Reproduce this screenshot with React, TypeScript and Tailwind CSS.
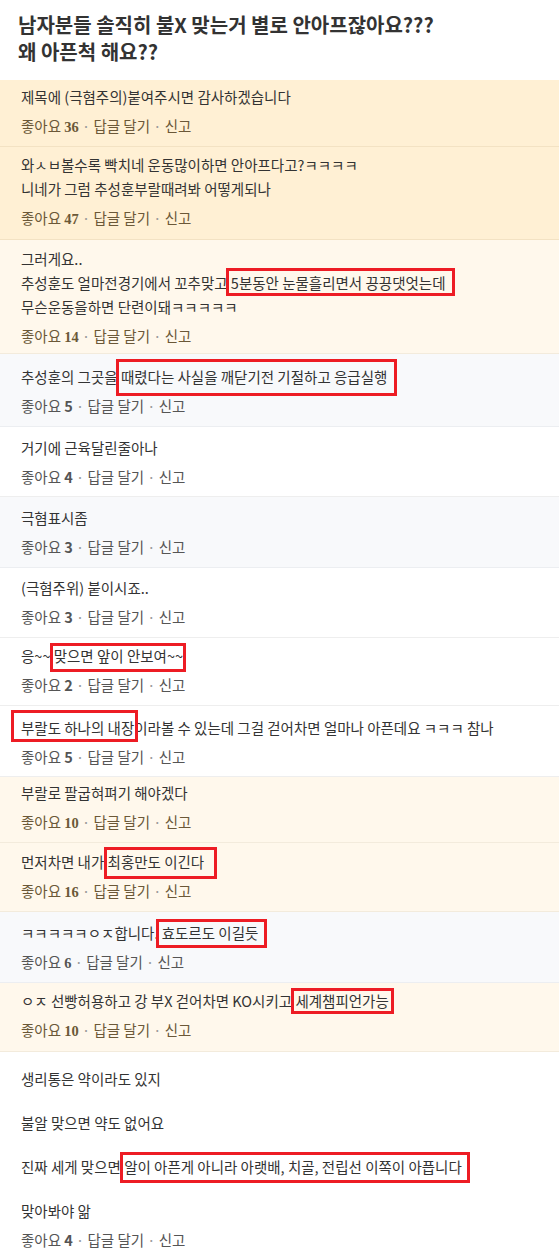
import type { ReactNode } from 'react';

type Tone = 'orange' | 'cream' | 'gray' | 'white';

const toneClass: Record<Tone, string> = {
  orange: 'bg-[#fff0d4] border-[#f3e2c3]',
  cream: 'bg-[#fff8ec] border-[#f3ebdc]',
  gray: 'bg-[#f8f9fb] border-[#eceef1]',
  white: 'bg-white border-[#eeeeee]',
};

const Mark = ({ children, box }: { children: ReactNode; box: string }) => (
  <span className="relative inline-block">
    {children}
    <span className={`pointer-events-none absolute border-[3px] border-[#ed1c24] ${box}`} />
  </span>
);

type Comment = {
  id: number;
  tone: Tone;
  pad: string;
  likes: number;
  serif?: boolean;
  lines: ReactNode[];
  spaced?: boolean;
  last?: boolean;
};

const comments: Comment[] = [
  {
    id: 1,
    tone: 'orange',
    pad: 'pt-[5px] pb-[7px]',
    likes: 36,
    serif: true,
    lines: ['제목에 (극혐주의)붙여주시면 감사하겠습니다'],
  },
  {
    id: 2,
    tone: 'orange',
    pad: 'pt-[6px] pb-[8px]',
    likes: 47,
    serif: true,
    lines: ['와ㅅㅂ볼수록 빡치네 운동많이하면 안아프다고?ㅋㅋㅋㅋ', '니네가 그럼 추성훈부랄때려봐 어떻게되나'],
  },
  {
    id: 3,
    tone: 'cream',
    pad: 'pt-[7px] pb-[4px]',
    likes: 14,
    serif: true,
    lines: [
      '그러게요..',
      <>
        추성훈도 얼마전경기에서 꼬추맞고{' '}
        <Mark box="left-[-5px] right-[-9px] top-[-3px] bottom-[-1px]">5분동안 눈물흘리면서 끙끙댓엇는데</Mark>
      </>,
      '무슨운동을하면 단련이돼ㅋㅋㅋㅋㅋ',
    ],
  },
  {
    id: 4,
    tone: 'gray',
    pad: 'pt-[11px] pb-[8px]',
    likes: 5,
    lines: [
      <>
        추성훈의 그곳을{' '}
        <Mark box="left-[-5px] right-[-10px] top-[-6px] bottom-[-7px]">때렸다는 사실을 깨닫기전 기절하고 응급실행</Mark>
      </>,
    ],
  },
  { id: 5, tone: 'white', pad: 'pt-[9px] pb-[7px]', likes: 4, lines: ['거기에 근육달린줄아나'] },
  { id: 6, tone: 'gray', pad: 'pt-[9px] pb-[8px]', likes: 3, lines: ['극혐표시좀'] },
  { id: 7, tone: 'white', pad: 'pt-[8px] pb-[8px]', likes: 3, lines: ['(극혐주위) 붙이시죠..'] },
  {
    id: 8,
    tone: 'white',
    pad: 'pt-[6px] pb-[8px]',
    likes: 2,
    lines: [
      <>
        응~~{' '}
        <Mark box="left-[-4px] right-[-3px] top-[-1px] bottom-[-4px]">맞으면 앞이 안보여~~</Mark>
      </>,
    ],
  },
  {
    id: 9,
    tone: 'white',
    pad: 'pt-[10px] pb-[7px]',
    likes: 5,
    lines: [
      <>
        <Mark box="left-[-10px] right-[-4px] top-[-6px] bottom-[-2px]">부랄도 하나의 내장</Mark>
        이라볼 수 있는데 그걸 걷어차면 얼마나 아픈데요 ㅋㅋㅋ 참나
      </>,
    ],
  },
  { id: 10, tone: 'cream', pad: 'pt-[4px] pb-[7px]', likes: 10, serif: true, lines: ['부랄로 팔굽혀펴기 해야겠다'] },
  {
    id: 11,
    tone: 'cream',
    pad: 'pt-[7px] pb-[7px]',
    likes: 16,
    serif: true,
    lines: [
      <>
        먼저차면 내가{' '}
        <Mark box="left-[-4px] right-[-13px] top-[-3px] bottom-[-5px]">최홍만도 이긴다</Mark>
      </>,
    ],
  },
  {
    id: 12,
    tone: 'gray',
    pad: 'pt-[9px] pb-[7px]',
    likes: 6,
    serif: true,
    lines: [
      <>
        ㅋㅋㅋㅋㅋㅇㅈ합니다.{' '}
        <Mark box="left-[-6px] right-[-9px] top-[-2px] bottom-[-3px]">효도르도 이길듯</Mark>
      </>,
    ],
  },
  {
    id: 13,
    tone: 'cream',
    pad: 'pt-[6px] pb-[8px]',
    likes: 10,
    serif: true,
    lines: [
      <>
        ㅇㅈ 선빵허용하고 강 부X 걷어차면 KO시키고{' '}
        <Mark box="left-[-4px] right-[-5px] top-[-1px] bottom-[-1px]">세계챔피언가능</Mark>
      </>,
    ],
  },
  {
    id: 14,
    tone: 'white',
    pad: 'pt-[15px] pb-[4px]',
    likes: 4,
    spaced: true,
    last: true,
    lines: [
      '생리통은 약이라도 있지',
      '불알 맞으면 약도 없어요',
      <>
        진짜 세게 맞으면{' '}
        <Mark box="left-[-4px] right-[-8px] top-[-3px] bottom-[-4px]">
          알이 아픈게 아니라 아랫배, 치골, 전립선 이쪽이 아픕니다
        </Mark>
      </>,
      '맞아봐야 앎',
    ],
  },
];

const App = () => {
  return (
    <div className="min-h-[1255px] w-full bg-white font-['Noto_Sans_CJK_KR',sans-serif] text-[#333]">
      <h1 className="px-[18px] pt-[11px] pb-[15px] text-[20px] font-bold leading-[27px] text-[#333]">
        남자분들 솔직히 불X 맞는거 별로 안아프잖아요???
        <br />
        왜 아픈척 해요??
      </h1>

      {comments.map((c) => {
        const warm = c.tone === 'orange' || c.tone === 'cream';
        return (
          <div
            key={c.id}
            className={`relative px-[21px] text-[14.5px] leading-6 ${toneClass[c.tone]} ${c.pad} ${c.last ? '' : 'border-b'}`}
          >
            <div className={c.spaced ? 'flex flex-col gap-5' : ''}>
              {c.lines.map((line, i) => (
                <p key={i} className="whitespace-nowrap">
                  {line}
                </p>
              ))}
            </div>
            <p className={`mt-[5px] ${warm ? 'text-[#6b5838]' : 'text-[#555]'}`}>
              좋아요{' '}
              <b className={c.serif ? "font-['Liberation_Serif',serif] font-bold" : 'font-bold'}>{c.likes}</b>
              <span className="text-[#999]"> · </span>답글 달기<span className="text-[#999]"> · </span>신고
            </p>
          </div>
        );
      })}
    </div>
  );
};

export default App;
